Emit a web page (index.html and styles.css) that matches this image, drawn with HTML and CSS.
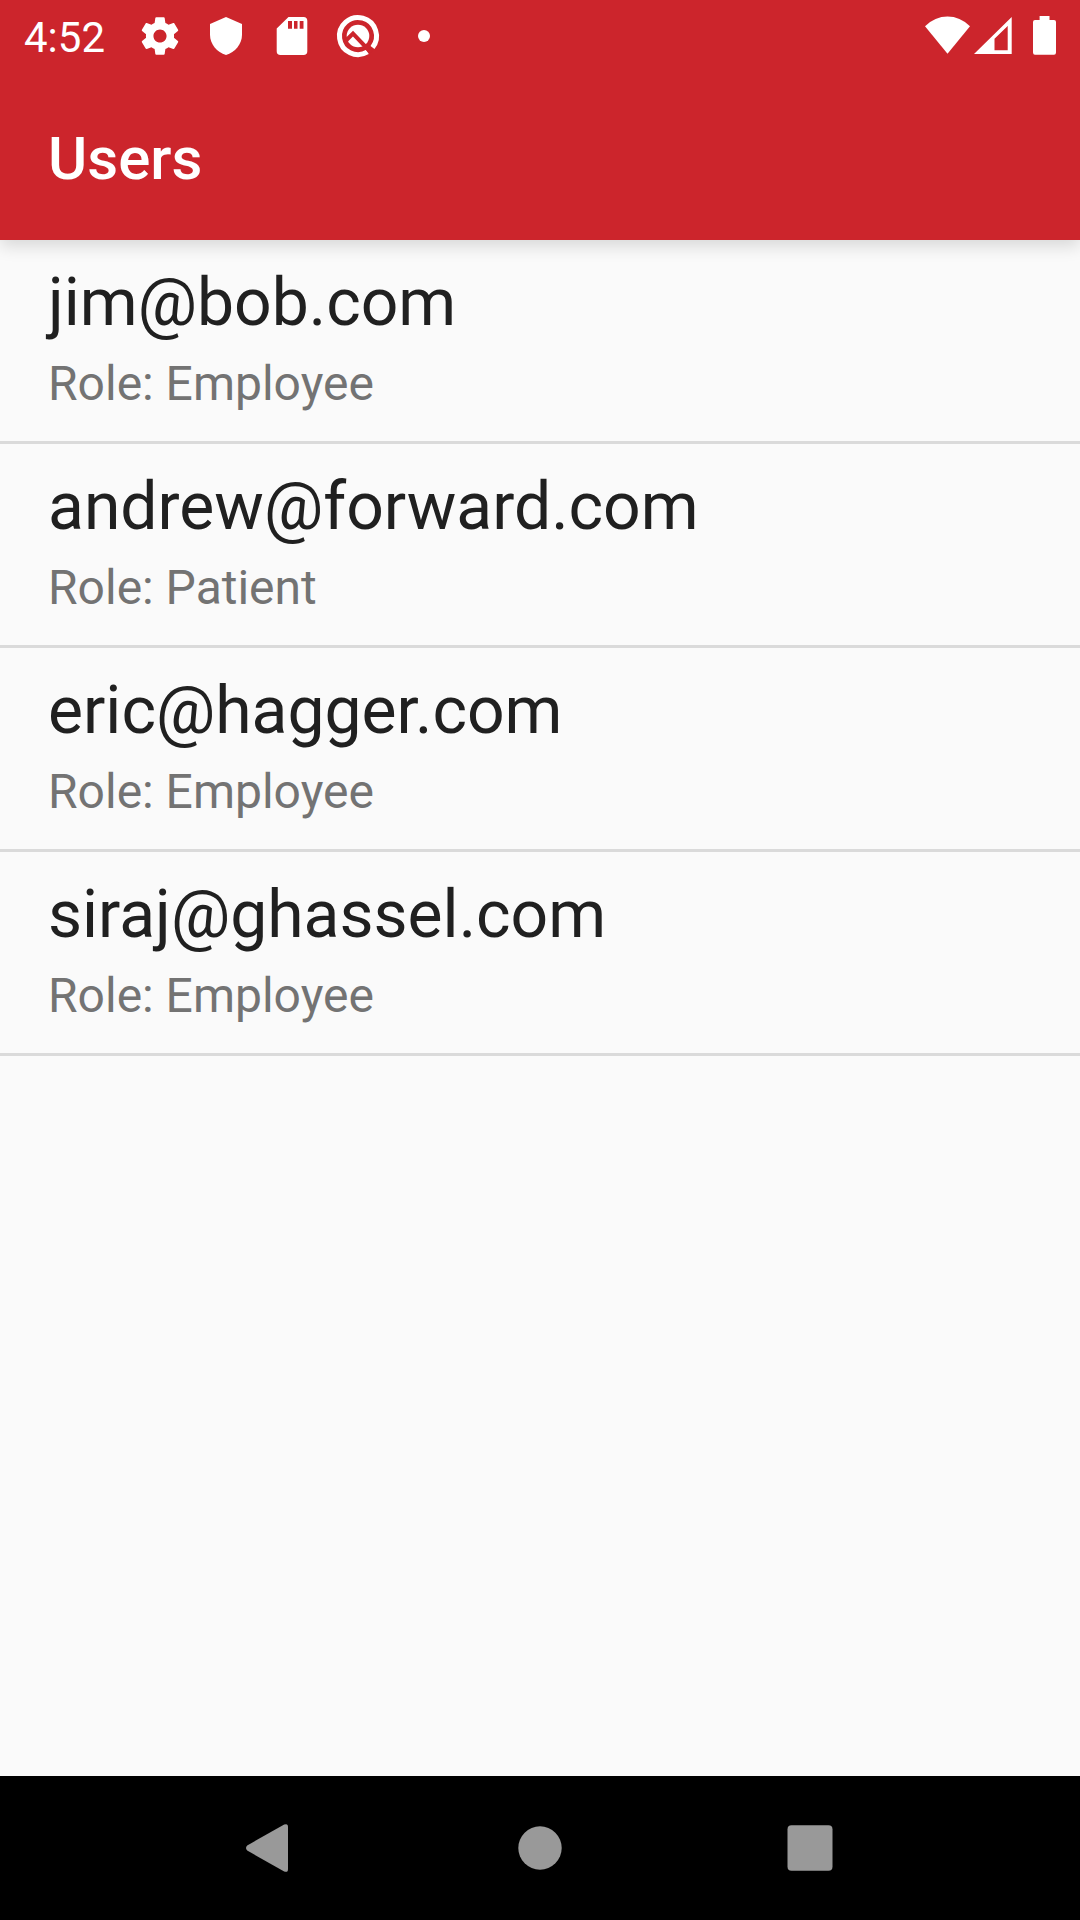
FILE: index.html
```html
<!DOCTYPE html>
<html lang="en">
<head>
<meta charset="utf-8">
<title>Users</title>
<link rel="stylesheet" href="styles.css">
</head>
<body>
<div class="screen">
  <header class="header">
    <div class="status-bar">
      <span class="clock">4:52</span>
      <div class="notifications">
        <svg class="slot" viewBox="-33 -36 66 72"><g transform="translate(-22.5 -22.5) scale(1.875)"><path d="M19.43 12.98c.04-.32.07-.64.07-.98s-.03-.66-.07-.98l2.11-1.65c.19-.15.24-.42.12-.64l-2-3.46c-.12-.22-.39-.3-.61-.22l-2.49 1c-.52-.4-1.08-.73-1.69-.98l-.38-2.65C14.46 2.18 14.25 2 14 2h-4c-.25 0-.46.18-.49.42l-.38 2.65c-.61.25-1.17.59-1.69.98l-2.49-1c-.23-.09-.49 0-.61.22l-2 3.46c-.13.22-.07.49.12.64l2.11 1.65c-.04.32-.07.65-.07.98s.03.66.07.98l-2.11 1.65c-.19.15-.24.42-.12.64l2 3.46c.12.22.39.3.61.22l2.49-1c.52.4 1.08.73 1.69.98l.38 2.65c.03.24.24.42.49.42h4c.25 0 .46-.18.49-.42l.38-2.65c.61-.25 1.17-.59 1.69-.98l2.49 1c.23.09.49 0 .61-.22l2-3.46c.12-.22.07-.49-.12-.64l-2.11-1.65zM12 15.500c-1.930 0-3.500-1.570-3.500-3.500s1.570-3.500 3.500-3.500 3.500 1.570 3.500 3.500-1.570 3.500-3.500 3.500z"/></g></svg>
        <svg class="slot" viewBox="-33 -36 66 72"><path d="M0-19 16-12V-1C16 8 9 16.500 0 19-9 16.500-16 8-16-1V-12Z"/></svg>
        <svg class="slot" viewBox="-33 -36 66 72"><path fill-rule="evenodd" d="M-3.500-19H11.500Q15.300-19 15.300-15.200V15.200Q15.300 19 11.500 19H-11.500Q-15.300 19-15.300 15.200V-7.500ZM-4-15V-7.300H0V-15ZM2-15V-7.300H5.500V-15ZM7.700-15V-7.300H11.500V-15Z"/></svg>
        <svg class="slot" viewBox="-33 -36 66 72">
          <path class="ring" d="M9.500 15.900A18.500 18.500 0 1 1 14.500 11.500"/>
          <circle r="11.300"/>
          <path class="cut" d="M-12 4.500-5-2.500 13 16.500"/>
        </svg>
        <svg class="slot" viewBox="-33 -36 66 72"><circle r="6"/></svg>
      </div>
      <div class="system-icons">
        <svg width="45" height="38" viewBox="0 0 45 38"><path d="M0 10.200Q10 .5 22.500.5T45 10.200L22.500 37.800Z"/></svg>
        <svg width="38" height="38" viewBox="0 0 38 38"><path fill-rule="evenodd" d="M0 38 37.700 1V38ZM20.500 22.800V34.200H33.700V10Z"/></svg>
        <svg class="battery" width="23" height="39" viewBox="0 0 23 39"><path d="M6.600 0H16.500V4H21Q23 4 23 6V36.500Q23 38.700 21 38.700H2Q0 38.700 0 36.500V6Q0 4 2 4H6.600Z"/></svg>
      </div>
    </div>
    <h1 class="title">Users</h1>
  </header>
  <main class="content">
    <ul class="users">
      <li class="user"><span class="email">jim@bob.com</span><span class="role">Role: Employee</span></li>
      <li class="user"><span class="email">andrew@forward.com</span><span class="role">Role: Patient</span></li>
      <li class="user"><span class="email">eric@hagger.com</span><span class="role">Role: Employee</span></li>
      <li class="user"><span class="email">siraj@ghassel.com</span><span class="role">Role: Employee</span></li>
    </ul>
  </main>
  <nav class="nav-bar">
    <svg class="nav-icon" viewBox="0 0 72 72"><path d="M13.200 33.400 50.200 12.600Q54 11 54 15V57Q54 61 50.200 59.400L13.200 38.600Q10.800 36 13.200 33.400Z"/></svg>
    <svg class="nav-icon" viewBox="0 0 72 72"><circle cx="36" cy="36" r="21.700"/></svg>
    <svg class="nav-icon" viewBox="0 0 72 72"><rect x="13.500" y="13.300" width="45" height="45.400" rx="4"/></svg>
  </nav>
</div>
</body>
</html>
```
FILE: styles.css
```css
* {
  box-sizing: border-box;
}

body {
  margin: 0;
  font-family: Roboto, sans-serif;
}

.screen {
  display: flex;
  flex-direction: column;
  width: 1080px;
  height: 1920px;
  overflow: hidden;
  background: #fafafa;
}

.header {
  flex: none;
  height: 240px;
  z-index: 1;
  background: #cc252c;
  color: #fff;
  box-shadow: 0 6px 16px rgba(0, 0, 0, 0.14);
}

.status-bar {
  display: flex;
  height: 72px;
  padding: 0 24px;
  fill: #fff;
}

.clock {
  width: 103px;
  font-size: 42px;
  line-height: 76px;
}

.notifications {
  display: flex;
}

.slot {
  width: 66px;
  height: 72px;
}

.ring {
  fill: none;
  stroke: #fff;
  stroke-width: 5;
}

.cut {
  fill: none;
  stroke: #cc252c;
  stroke-width: 4;
}

.system-icons {
  display: flex;
  gap: 4px;
  margin-left: auto;
  padding-top: 16px;
}

.system-icons svg {
  flex: none;
}

.battery {
  margin-left: 17px;
}

.title {
  margin: 0;
  padding-left: 48px;
  font-size: 60px;
  font-weight: 500;
  line-height: 173px;
}

.content {
  flex: 1;
}

.users {
  margin: 0;
  padding: 0;
  list-style: none;
}

.user {
  display: flex;
  flex-direction: column;
  height: 204px;
  padding: 24px 48px 0;
  border-bottom: 3px solid #dadada;
}

.email {
  color: #202020;
  font-size: 66px;
  line-height: 77px;
}

.role {
  margin-top: 15px;
  color: #737373;
  font-size: 48px;
  line-height: 56px;
}

.nav-bar {
  display: flex;
  flex: none;
  align-items: center;
  justify-content: center;
  gap: 198px;
  height: 144px;
  background: #000;
  fill: #999;
}

.nav-icon {
  width: 72px;
  height: 72px;
}
```
